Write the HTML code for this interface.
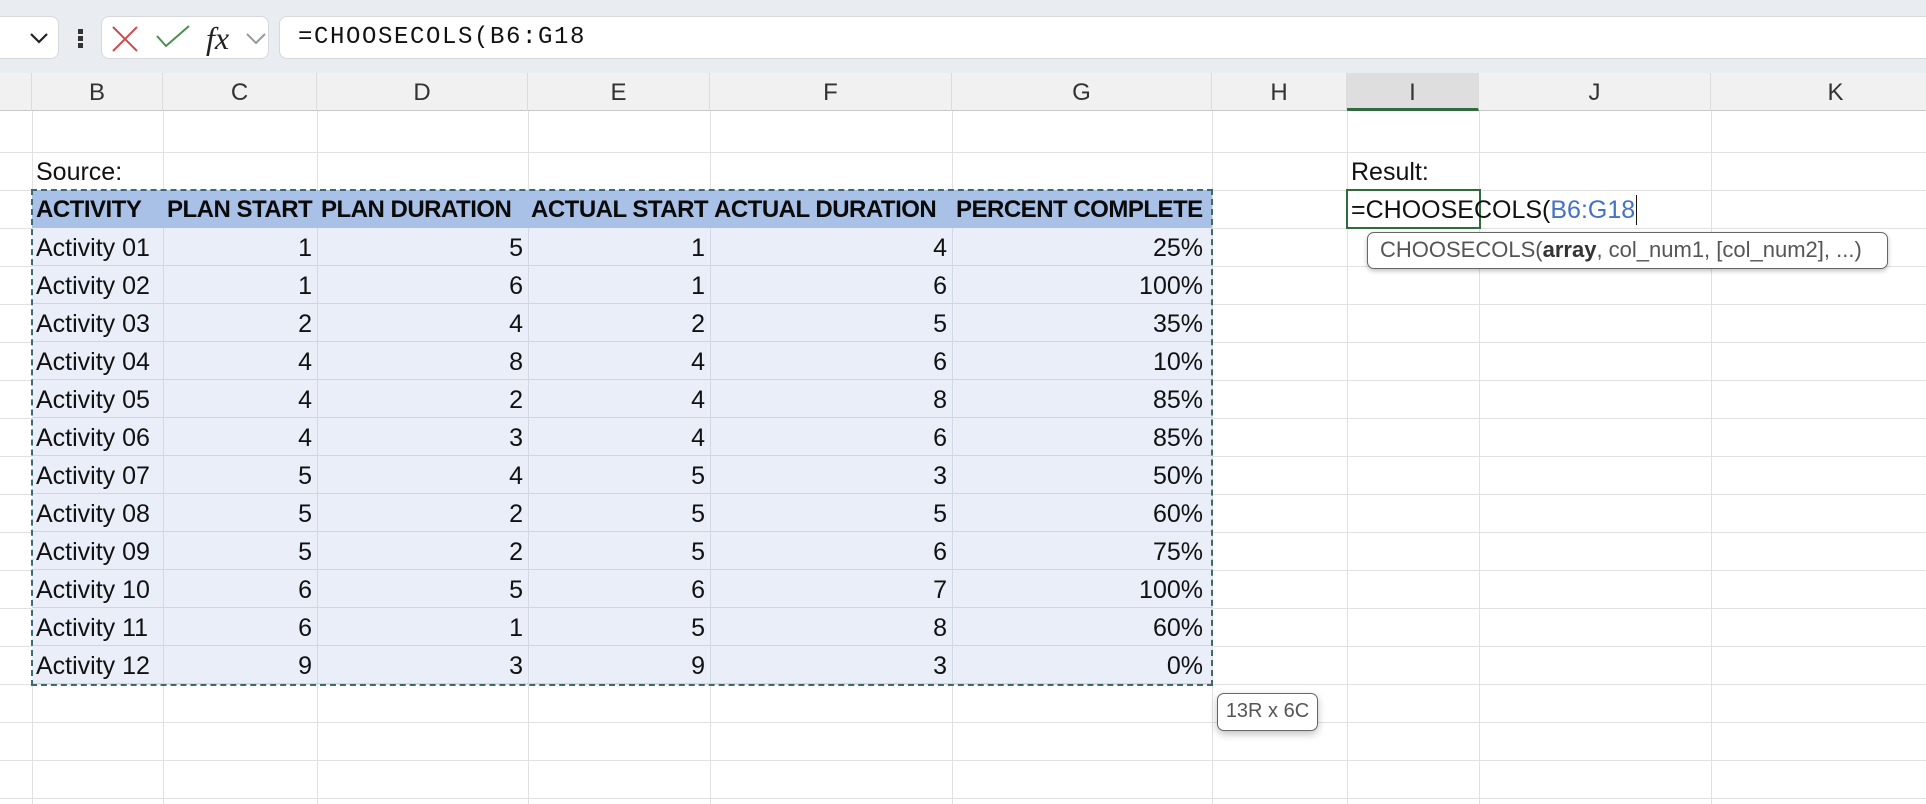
<!DOCTYPE html>
<html><head><meta charset="utf-8"><style>
*{margin:0;padding:0;box-sizing:border-box}
body{width:1926px;height:804px;overflow:hidden;background:#fff;position:relative;font-family:"Liberation Sans",sans-serif}
.a{position:absolute}
.vl{position:absolute;top:111px;bottom:0;width:1px;background:#e1e1e1}
.hl{position:absolute;left:0;right:0;height:1px;background:#e1e1e1}
.t{position:absolute;font-size:25px;color:#111;white-space:nowrap;line-height:38px}
.h{position:absolute;font-size:24px;font-weight:bold;color:#0a0a0a;white-space:nowrap;line-height:38px;letter-spacing:-0.5px}
.r{text-align:right}
.ch{position:absolute;top:73px;height:38px;line-height:40px;text-align:center;font-size:24px;color:#333;border-right:1px solid #dcdcdc}
</style></head><body>
<div class="a" style="left:0;top:0;width:1926px;height:73px;background:#e9ecf0"></div>
<div class="a" style="left:-10px;top:16px;width:69px;height:43px;background:#fff;border:1px solid #d6d8dc;border-radius:8px"></div>
<svg class="a" style="left:28px;top:30px" width="22" height="16"><path d="M3 4 L11 12 L19 4" stroke="#222" stroke-width="2.2" fill="none"/></svg>
<div class="a" style="left:78px;top:29px;width:5px;height:5px;background:#333"></div>
<div class="a" style="left:78px;top:36px;width:5px;height:5px;background:#333"></div>
<div class="a" style="left:78px;top:43px;width:5px;height:5px;background:#333"></div>
<div class="a" style="left:101px;top:16px;width:168px;height:43px;background:#fff;border:1px solid #d6d8dc;border-radius:8px"></div>
<svg class="a" style="left:110px;top:24px" width="30" height="30"><path d="M3 3 L27 27 M27 3 L3 27" stroke="#d04a4a" stroke-width="2" fill="none"/></svg>
<svg class="a" style="left:155px;top:24px" width="36" height="26"><path d="M2 12 L11 22 L34 2" stroke="#4a8f52" stroke-width="2" fill="none"/></svg>
<div class="a" style="left:206px;top:18px;font-family:'Liberation Serif',serif;font-style:italic;font-size:32px;color:#222;line-height:40px">fx</div>
<svg class="a" style="left:245px;top:32px" width="22" height="14"><path d="M2 2 L11 11 L20 2" stroke="#999" stroke-width="2" fill="none"/></svg>
<div class="a" style="left:279px;top:16px;width:1660px;height:43px;background:#fff;border:1px solid #d6d8dc;border-radius:8px"></div>
<div class="a" style="left:298px;top:21px;font-family:'Liberation Mono',monospace;font-size:24px;letter-spacing:1.6px;color:#111;line-height:34px">=CHOOSECOLS(B6:G18</div>
<div class="a" style="left:0;top:73px;width:1926px;height:38px;background:#f1f1f1;border-bottom:1px solid #c8c8c8"></div>
<div class="ch" style="left:0;width:32px"></div>
<div class="ch" style="left:32px;width:131px">B</div>
<div class="ch" style="left:163px;width:154px">C</div>
<div class="ch" style="left:317px;width:211px">D</div>
<div class="ch" style="left:528px;width:182px">E</div>
<div class="ch" style="left:710px;width:242px">F</div>
<div class="ch" style="left:952px;width:260px">G</div>
<div class="ch" style="left:1212px;width:135px">H</div>
<div class="ch" style="left:1347px;width:132px;background:#dedede;border-bottom:3px solid #2f6b3f;height:38px">I</div>
<div class="ch" style="left:1479px;width:232px">J</div>
<div class="ch" style="left:1711px;width:250px">K</div>
<div class="vl" style="left:32px"></div><div class="vl" style="left:163px"></div><div class="vl" style="left:317px"></div><div class="vl" style="left:528px"></div><div class="vl" style="left:710px"></div><div class="vl" style="left:952px"></div><div class="vl" style="left:1212px"></div><div class="vl" style="left:1347px"></div><div class="vl" style="left:1479px"></div><div class="vl" style="left:1711px"></div>
<div class="hl" style="top:152px"></div><div class="hl" style="top:190px"></div><div class="hl" style="top:228px"></div><div class="hl" style="top:266px"></div><div class="hl" style="top:304px"></div><div class="hl" style="top:342px"></div><div class="hl" style="top:380px"></div><div class="hl" style="top:418px"></div><div class="hl" style="top:456px"></div><div class="hl" style="top:494px"></div><div class="hl" style="top:532px"></div><div class="hl" style="top:570px"></div><div class="hl" style="top:608px"></div><div class="hl" style="top:646px"></div><div class="hl" style="top:684px"></div><div class="hl" style="top:722px"></div><div class="hl" style="top:760px"></div><div class="hl" style="top:798px"></div>
<div class="a" style="left:32px;top:190px;width:1180px;height:38px;background:#a9c1e6"></div>
<div class="a" style="left:32px;top:228px;width:1180px;height:456px;background:#e9eef8"></div>
<div class="a" style="left:32px;top:228px;width:1180px;height:456px;background:repeating-linear-gradient(to bottom,transparent 0,transparent 37px,#cfd5e0 37px,#cfd5e0 38px)"></div>
<div class="a" style="left:163px;top:228px;width:1px;height:456px;background:#d3d9e4"></div><div class="a" style="left:317px;top:228px;width:1px;height:456px;background:#d3d9e4"></div><div class="a" style="left:528px;top:228px;width:1px;height:456px;background:#d3d9e4"></div><div class="a" style="left:710px;top:228px;width:1px;height:456px;background:#d3d9e4"></div><div class="a" style="left:952px;top:228px;width:1px;height:456px;background:#d3d9e4"></div>
<div class="a" style="left:31px;top:189px;width:1182px;height:497px;border:2px dashed #3c6a6e"></div>
<div class="t" style="left:36px;top:153px">Source:</div>
<div class="h" style="left:36px;top:191px">ACTIVITY</div>
<div class="h" style="left:167px;top:191px">PLAN START</div>
<div class="h" style="left:321px;top:191px">PLAN DURATION</div>
<div class="h" style="left:531px;top:191px">ACTUAL START</div>
<div class="h" style="left:714px;top:191px">ACTUAL DURATION</div>
<div class="h" style="left:956px;top:191px">PERCENT COMPLETE</div>
<div id="rows"></div>
<script>
var d=[["01",1,5,1,4,"25%"],["02",1,6,1,6,"100%"],["03",2,4,2,5,"35%"],["04",4,8,4,6,"10%"],["05",4,2,4,8,"85%"],["06",4,3,4,6,"85%"],["07",5,4,5,3,"50%"],["08",5,2,5,5,"60%"],["09",5,2,5,6,"75%"],["10",6,5,6,7,"100%"],["11",6,1,5,8,"60%"],["12",9,3,9,3,"0%"]];
var R=[163,317,528,710,952,1208],h="";
d.forEach(function(r,i){var y=229+i*38;h+='<div class="t" style="left:36px;top:'+y+'px">Activity '+r[0]+'</div>';
for(var j=1;j<6;j++){h+='<div class="t r" style="left:0;width:'+(R[j]-5)+'px;top:'+y+'px">'+r[j]+'</div>';}});
document.getElementById("rows").innerHTML=h;
</script>
<div class="t" style="left:1351px;top:153px">Result:</div>
<div class="a" style="left:1346px;top:189px;width:135px;height:40px;border:2px solid #2f6b3f"></div>
<div class="t" style="left:1351px;top:191px">=CHOOSECOLS(<span style="color:#4472c4">B6:G18</span></div>
<div class="a" style="left:1636px;top:195px;width:1px;height:30px;background:#111"></div>
<div class="a" style="left:1367px;top:232px;width:521px;height:37px;background:#fff;border:1.5px solid #666;border-radius:7px;box-shadow:0 2px 5px rgba(0,0,0,.25);font-size:22px;color:#555;line-height:34px;padding-left:12px;white-space:nowrap">CHOOSECOLS(<b style="color:#333">array</b>, col_num1, [col_num2], ...)</div>
<div class="a" style="left:1217px;top:693px;width:101px;height:38px;background:#fff;border:1.5px solid #666;border-radius:7px;box-shadow:0 3px 8px rgba(0,0,0,.25);font-size:20px;color:#555;line-height:35px;text-align:center">13R x 6C</div>
</body></html>
